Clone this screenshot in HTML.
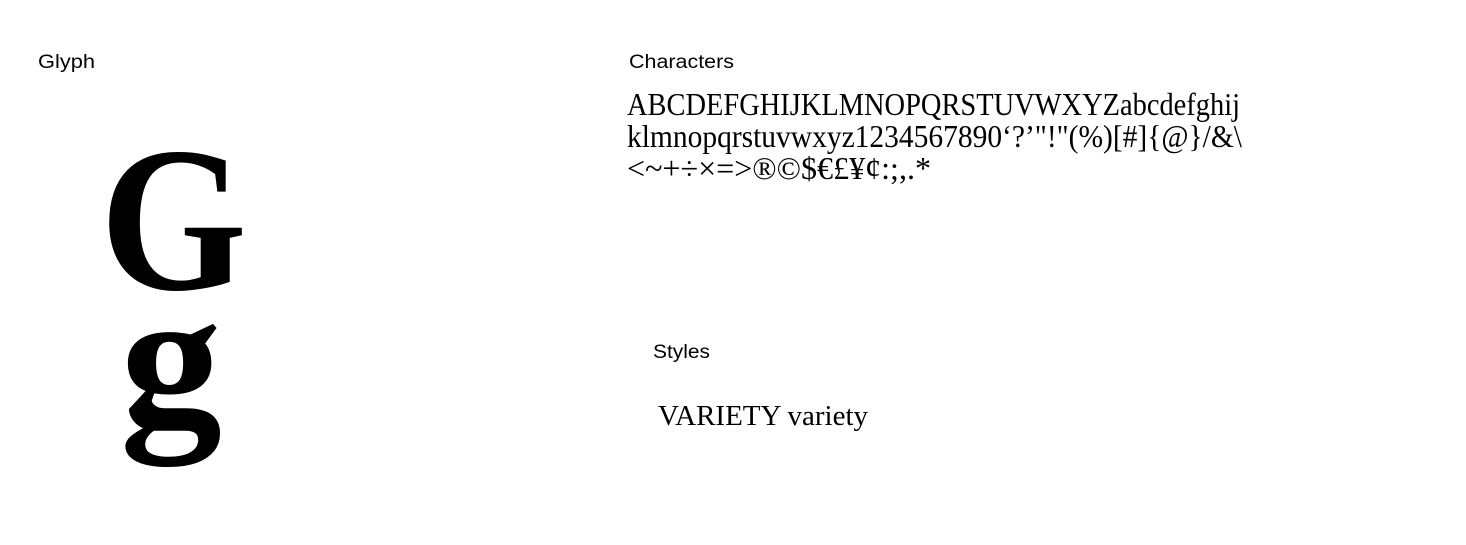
<!DOCTYPE html>
<html><head><style>html,body{margin:0;padding:0;background:#fff;}svg{display:block}</style></head>
<body>
<svg width="1466" height="545" xmlns="http://www.w3.org/2000/svg">
<g font-family="Liberation Sans, sans-serif" font-size="19" fill="#000">
<text x="38" y="68" textLength="57" lengthAdjust="spacingAndGlyphs">Glyph</text>
<text x="629" y="68" textLength="105" lengthAdjust="spacingAndGlyphs">Characters</text>
<text x="653" y="358" textLength="57" lengthAdjust="spacingAndGlyphs">Styles</text>
</g>
<g font-family="Liberation Serif, serif" fill="#000">
<text x="100" y="289" font-size="207" font-weight="bold" textLength="147" lengthAdjust="spacingAndGlyphs">G</text>
<text x="120" y="424" font-size="195" font-weight="bold" textLength="102" lengthAdjust="spacingAndGlyphs">g</text>
<text x="627" y="115" font-size="32" textLength="613" lengthAdjust="spacingAndGlyphs">ABCDEFGHIJKLMNOPQRSTUVWXYZabcdefghij</text>
<text x="627" y="147" font-size="32" textLength="615" lengthAdjust="spacingAndGlyphs">klmnopqrstuvwxyz1234567890‘?’"!"(%)[#]{@}/&amp;\</text>
<text x="627" y="179" font-size="32" textLength="304" lengthAdjust="spacingAndGlyphs">&lt;~+÷×=&gt;®©$€£¥¢:;,.*</text>
<text x="658" y="425" font-size="29" textLength="210" lengthAdjust="spacingAndGlyphs">VARIETY variety</text>
</g>
</svg>
</body></html>
